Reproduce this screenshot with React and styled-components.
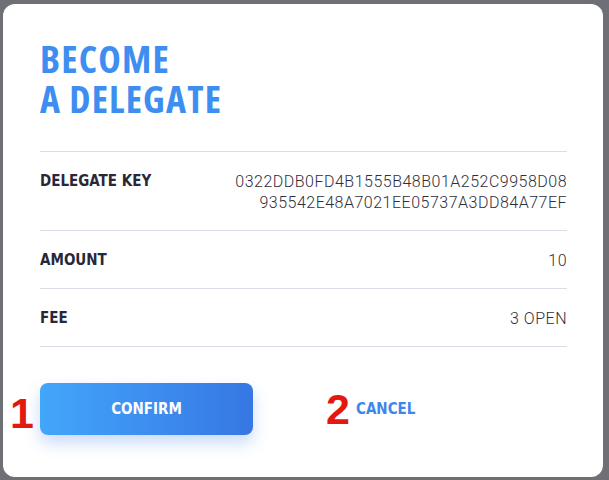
import React from "react";
import styled, { createGlobalStyle } from "styled-components";

const GlobalStyle = createGlobalStyle`
  html, body {
    margin: 0;
    padding: 0;
    background-color: #6f7076;
  }
  * {
    box-sizing: border-box;
  }
`;

const delegateKey =
  "0322DDB0FD4B1555B48B01A252C9958D08935542E48A7021EE05737A3DD84A77EF";

const rows = [
  { label: "DELEGATE KEY", value: [delegateKey.slice(0, 34), delegateKey.slice(34)] },
  { label: "AMOUNT", value: ["10"] },
  { label: "FEE", value: ["3 OPEN"] },
];

const App = () => {
  return (
    <>
      <GlobalStyle />
      <Backdrop>
        <Modal>
          <Title>
            <TitleLine>BECOME</TitleLine>
            <TitleLine>A DELEGATE</TitleLine>
          </Title>
          <Details>
            {rows.map((row) => (
              <Row key={row.label}>
                <Label>{row.label}</Label>
                <Value>
                  {row.value.map((line) => (
                    <span key={line}>{line}</span>
                  ))}
                </Value>
              </Row>
            ))}
          </Details>
          <Footer>
            <Action>
              <Marker $shift={4}>1</Marker>
              <ConfirmButton type="button">CONFIRM</ConfirmButton>
            </Action>
            <Action>
              <Marker $shift={0}>2</Marker>
              <CancelButton type="button">CANCEL</CancelButton>
            </Action>
          </Footer>
        </Modal>
      </Backdrop>
    </>
  );
};

export default App;

const Backdrop = styled.div`
  width: 609px;
  height: 480px;
  padding: 4px 6px 3px 3px;
  background-color: #6f7076;
`;

const Modal = styled.div`
  width: 600px;
  height: 473px;
  background-color: #ffffff;
  border-radius: 12px;
  padding: 34px 36px 0 37px;
  font-family: "DejaVu Sans Condensed", "DejaVu Sans", sans-serif;
`;

const Title = styled.h1`
  margin: 0 0 33px;
  font-family: "Open Sans", sans-serif;
  font-stretch: 75%;
  font-size: 38px;
  letter-spacing: 1.2px;
  font-weight: 700;
  color: #3d8ef0;
`;

const TitleLine = styled.span`
  display: block;
  height: 40px;
  line-height: 40px;
`;

const Details = styled.div`
  border-top: 1px solid #dddde9;
`;

const Row = styled.div`
  display: flex;
  justify-content: space-between;
  align-items: flex-start;
  padding: 19px 0 17px;
  border-bottom: 1px solid #dddde9;
`;

const Label = styled.div`
  font-size: 15px;
  line-height: 21px;
  font-weight: 700;
  color: #282838;
`;

const Value = styled.div`
  display: flex;
  flex-direction: column;
  align-items: flex-end;
  font-family: "Roboto", sans-serif;
  font-weight: 300;
  font-size: 16px;
  letter-spacing: 0.5px;
  line-height: 21px;
  color: #2e2e3c;
  text-align: right;
`;

const Footer = styled.div`
  display: flex;
  align-items: center;
  gap: 103px;
  margin-top: 36px;
`;

const Action = styled.div`
  position: relative;
  display: flex;
  align-items: center;
`;

const Marker = styled.span`
  position: absolute;
  right: 100%;
  margin-right: 6px;
  top: 50%;
  transform: translateY(calc(-50% + ${(p) => p.$shift}px));
  font-family: "Liberation Sans", sans-serif;
  font-weight: 700;
  font-size: 43px;
  line-height: 1;
  color: #e3180e;
`;

const ConfirmButton = styled.button`
  width: 213px;
  height: 52px;
  border: none;
  border-radius: 8px;
  background: linear-gradient(90deg, #42a6f9 0%, #3d8ef0 50%, #3677e3 100%);
  box-shadow: 0 8px 16px rgba(61, 126, 236, 0.28);
  color: #ffffff;
  font-family: "DejaVu Sans Condensed", "DejaVu Sans", sans-serif;
  font-weight: 700;
  font-size: 15px;
  cursor: pointer;
`;

const CancelButton = styled.button`
  padding: 0;
  border: none;
  background: none;
  color: #3d86ea;
  font-family: "DejaVu Sans Condensed", "DejaVu Sans", sans-serif;
  font-weight: 700;
  font-size: 15px;
  cursor: pointer;
`;
